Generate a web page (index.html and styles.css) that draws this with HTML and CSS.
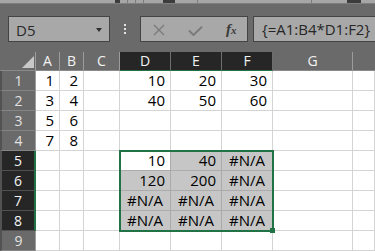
FILE: index.html
```html
<!DOCTYPE html>
<html>
<head>
<meta charset="utf-8">
<link rel="stylesheet" href="styles.css">
</head>
<body>
<div class="ribbon">
  <span class="mk dk" style="margin-left:115px;width:5px"></span>
  <span class="mk tk" style="margin-left:7px"></span>
  <span class="mk tk" style="margin-left:7px"></span>
  <span class="mk tk" style="margin-left:7px"></span>
  <span class="mk dk" style="margin-left:19px;width:12px"></span>
  <span class="mk tk" style="margin-left:22px"></span>
  <span class="mk tk" style="margin-left:113px"></span>
  <span class="mk dk" style="margin-left:35px;width:14px"></span>
</div>
<div class="fbar">
  <div class="namebox">
    <span class="nb-text">D5</span>
    <span class="nb-arrow"></span>
  </div>
  <div class="dots"><i></i><i></i><i></i></div>
  <div class="btns">
    <svg class="ic-x" width="12" height="12" viewBox="0 0 12 12"><path d="M1 1 L11 11 M11 1 L1 11" stroke="#7b7b7b" stroke-width="1.4" fill="none"/></svg>
    <svg class="ic-ok" width="15" height="10" viewBox="0 0 15 10"><path d="M1 4.5 L5.5 9 L14 0.8" stroke="#7b7b7b" stroke-width="2" fill="none"/></svg>
    <span class="fx">f<span class="fx-x">x</span></span>
  </div>
  <div class="formula">{=A1:B4*D1:F2}</div>
</div>
<div class="sheet">
  <div class="ch corner"><span class="tri"></span></div>
  <div class="ch">A</div><div class="ch">B</div><div class="ch">C</div>
  <div class="ch on">D</div><div class="ch on">E</div><div class="ch on">F</div>
  <div class="ch">G</div><div class="ch last"></div>

  <div class="rh">1</div><div class="c r">1</div><div class="c r">2</div><div class="c"></div><div class="c r">10</div><div class="c r">20</div><div class="c r">30</div><div class="c"></div><div class="c"></div>
  <div class="rh">2</div><div class="c r">3</div><div class="c r">4</div><div class="c"></div><div class="c r">40</div><div class="c r">50</div><div class="c r">60</div><div class="c"></div><div class="c"></div>
  <div class="rh">3</div><div class="c r">5</div><div class="c r">6</div><div class="c"></div><div class="c"></div><div class="c"></div><div class="c"></div><div class="c"></div><div class="c"></div>
  <div class="rh">4</div><div class="c r">7</div><div class="c r">8</div><div class="c"></div><div class="c"></div><div class="c"></div><div class="c"></div><div class="c"></div><div class="c"></div>
  <div class="rh on">5</div><div class="c"></div><div class="c"></div><div class="c"></div><div class="c r sel act">10</div><div class="c r sel">40</div><div class="c m sel">#N/A</div><div class="c"></div><div class="c"></div>
  <div class="rh on">6</div><div class="c"></div><div class="c"></div><div class="c"></div><div class="c r sel">120</div><div class="c r sel">200</div><div class="c m sel">#N/A</div><div class="c"></div><div class="c"></div>
  <div class="rh on">7</div><div class="c"></div><div class="c"></div><div class="c"></div><div class="c m sel">#N/A</div><div class="c m sel">#N/A</div><div class="c m sel">#N/A</div><div class="c"></div><div class="c"></div>
  <div class="rh on">8</div><div class="c"></div><div class="c"></div><div class="c"></div><div class="c m sel">#N/A</div><div class="c m sel">#N/A</div><div class="c m sel">#N/A</div><div class="c"></div><div class="c"></div>
  <div class="rh">9</div><div class="c"></div><div class="c"></div><div class="c"></div><div class="c"></div><div class="c"></div><div class="c"></div><div class="c"></div><div class="c"></div>

  <div class="range"><span class="handle"></span></div>
</div>
</body>
</html>
```

FILE: styles.css
```css
* { box-sizing: border-box; }
html, body { margin: 0; padding: 0; }
body {
  width: 375px;
  height: 251px;
  overflow: hidden;
  background: #6a6a6a;
  font-family: "Open Sans", "Noto Sans", sans-serif;
}
.ribbon {
  height: 4px;
  background: #a6a6a6;
  border-bottom: 1px solid #7e7e7e;
  display: flex;
  align-items: flex-start;
}
.mk { display: block; height: 3px; flex: none; }
.mk.dk { background: #3c3c3c; }
.mk.tk { width: 1px; background: #7c7c7c; }

.fbar {
  margin-top: 12px;
  height: 26px;
  display: flex;
  align-items: stretch;
  padding-left: 8px;
}
.namebox {
  width: 102px;
  background: #a8a8a8;
  border: 1px solid #444;
  display: flex;
  align-items: center;
  justify-content: space-between;
  padding: 0 7px 0 7px;
}
.nb-text {
  font-size: 15px;
  line-height: 20px;
  color: #2a2a2a;
  margin-top: 1px;
}
.nb-arrow {
  width: 0; height: 0;
  border-left: 3px solid transparent;
  border-right: 3px solid transparent;
  border-top: 4px solid #303030;
  margin-top: 1px;
}
.dots {
  width: 30px;
  display: flex;
  flex-direction: column;
  align-items: center;
  justify-content: center;
  gap: 2px;
}
.dots i { display: block; width: 2px; height: 2px; background: #e4e4e4; }
.btns {
  width: 108px;
  background: #a8a8a8;
  border: 1px solid #444;
  display: flex;
  align-items: center;
  padding-left: 12px;
}
.ic-x { margin-top: 1px; }
.ic-ok { margin-left: 23px; margin-top: 4px; }
.fx {
  margin-left: 23px;
  font-family: "Liberation Serif", "DejaVu Serif", serif;
  font-style: italic;
  font-weight: bold;
  font-size: 15px;
  color: #3a3a3a;
  line-height: 20px;
}
.fx-x { font-size: 11px; }
.formula {
  flex: 1;
  margin-left: 5px;
  margin-right: -3px;
  background: #a8a8a8;
  border: 1px solid #444;
  font-size: 15px;
  line-height: 24px;
  color: #262626;
  padding-left: 8px;
  white-space: nowrap;
}

.sheet {
  margin-top: 10px;
  position: relative;
  display: grid;
  grid-template-columns: 36px 24px 24px 36px 51px 51px 51px 80px 1fr;
  grid-template-rows: 19px repeat(9, 20px);
}
.ch {
  background: #6a6a6a;
  border-right: 1px solid #9c9c9c;
  border-bottom: 1px solid #8a8a8a;
  color: #f2f2f2;
  font-size: 14px;
  line-height: 18px;
  text-align: center;
}
.ch.on {
  background: #262626;
  border-right-color: #6e6e6e;
  border-bottom: 1px solid #217346;
}
.ch.last { border-right: none; }
.corner { position: relative; }
.tri {
  position: absolute;
  right: 1px;
  bottom: 2px;
  width: 0; height: 0;
  border-left: 12px solid transparent;
  border-bottom: 12px solid #c8c8c8;
}
.rh {
  background: #6a6a6a;
  border-left: 2px solid #525252;
  border-right: 1px solid #9c9c9c;
  border-bottom: 1px solid #858585;
  color: #e2e2e2;
  font-size: 14px;
  line-height: 19px;
  text-align: center;
}
.rh.on {
  background: #262626;
  border-right: 2px solid #217346;
  border-bottom-color: #505050;
  color: #f4f4f4;
}
.c {
  background: #fff;
  border-right: 1px solid #d4d4d4;
  border-bottom: 1px solid #d4d4d4;
  font-size: 15px;
  line-height: 19px;
  color: #000;
  white-space: nowrap;
  overflow: hidden;
}
.c.r { text-align: right; padding-right: 5px; }
.c.m { text-align: center; }
.c.sel {
  background: #c6c6c6;
  border-color: #ababab;
}
.c.sel.act { background: #fff; }
.range {
  position: absolute;
  grid-column: 5 / 8;
  grid-row: 6 / 10;
  top: -1px; left: -1px; right: -1px; bottom: -1px;
  border: 2px solid #217346;
}
.handle {
  position: absolute;
  right: -3px;
  bottom: -3px;
  width: 5px;
  height: 5px;
  background: #217346;
}
```
